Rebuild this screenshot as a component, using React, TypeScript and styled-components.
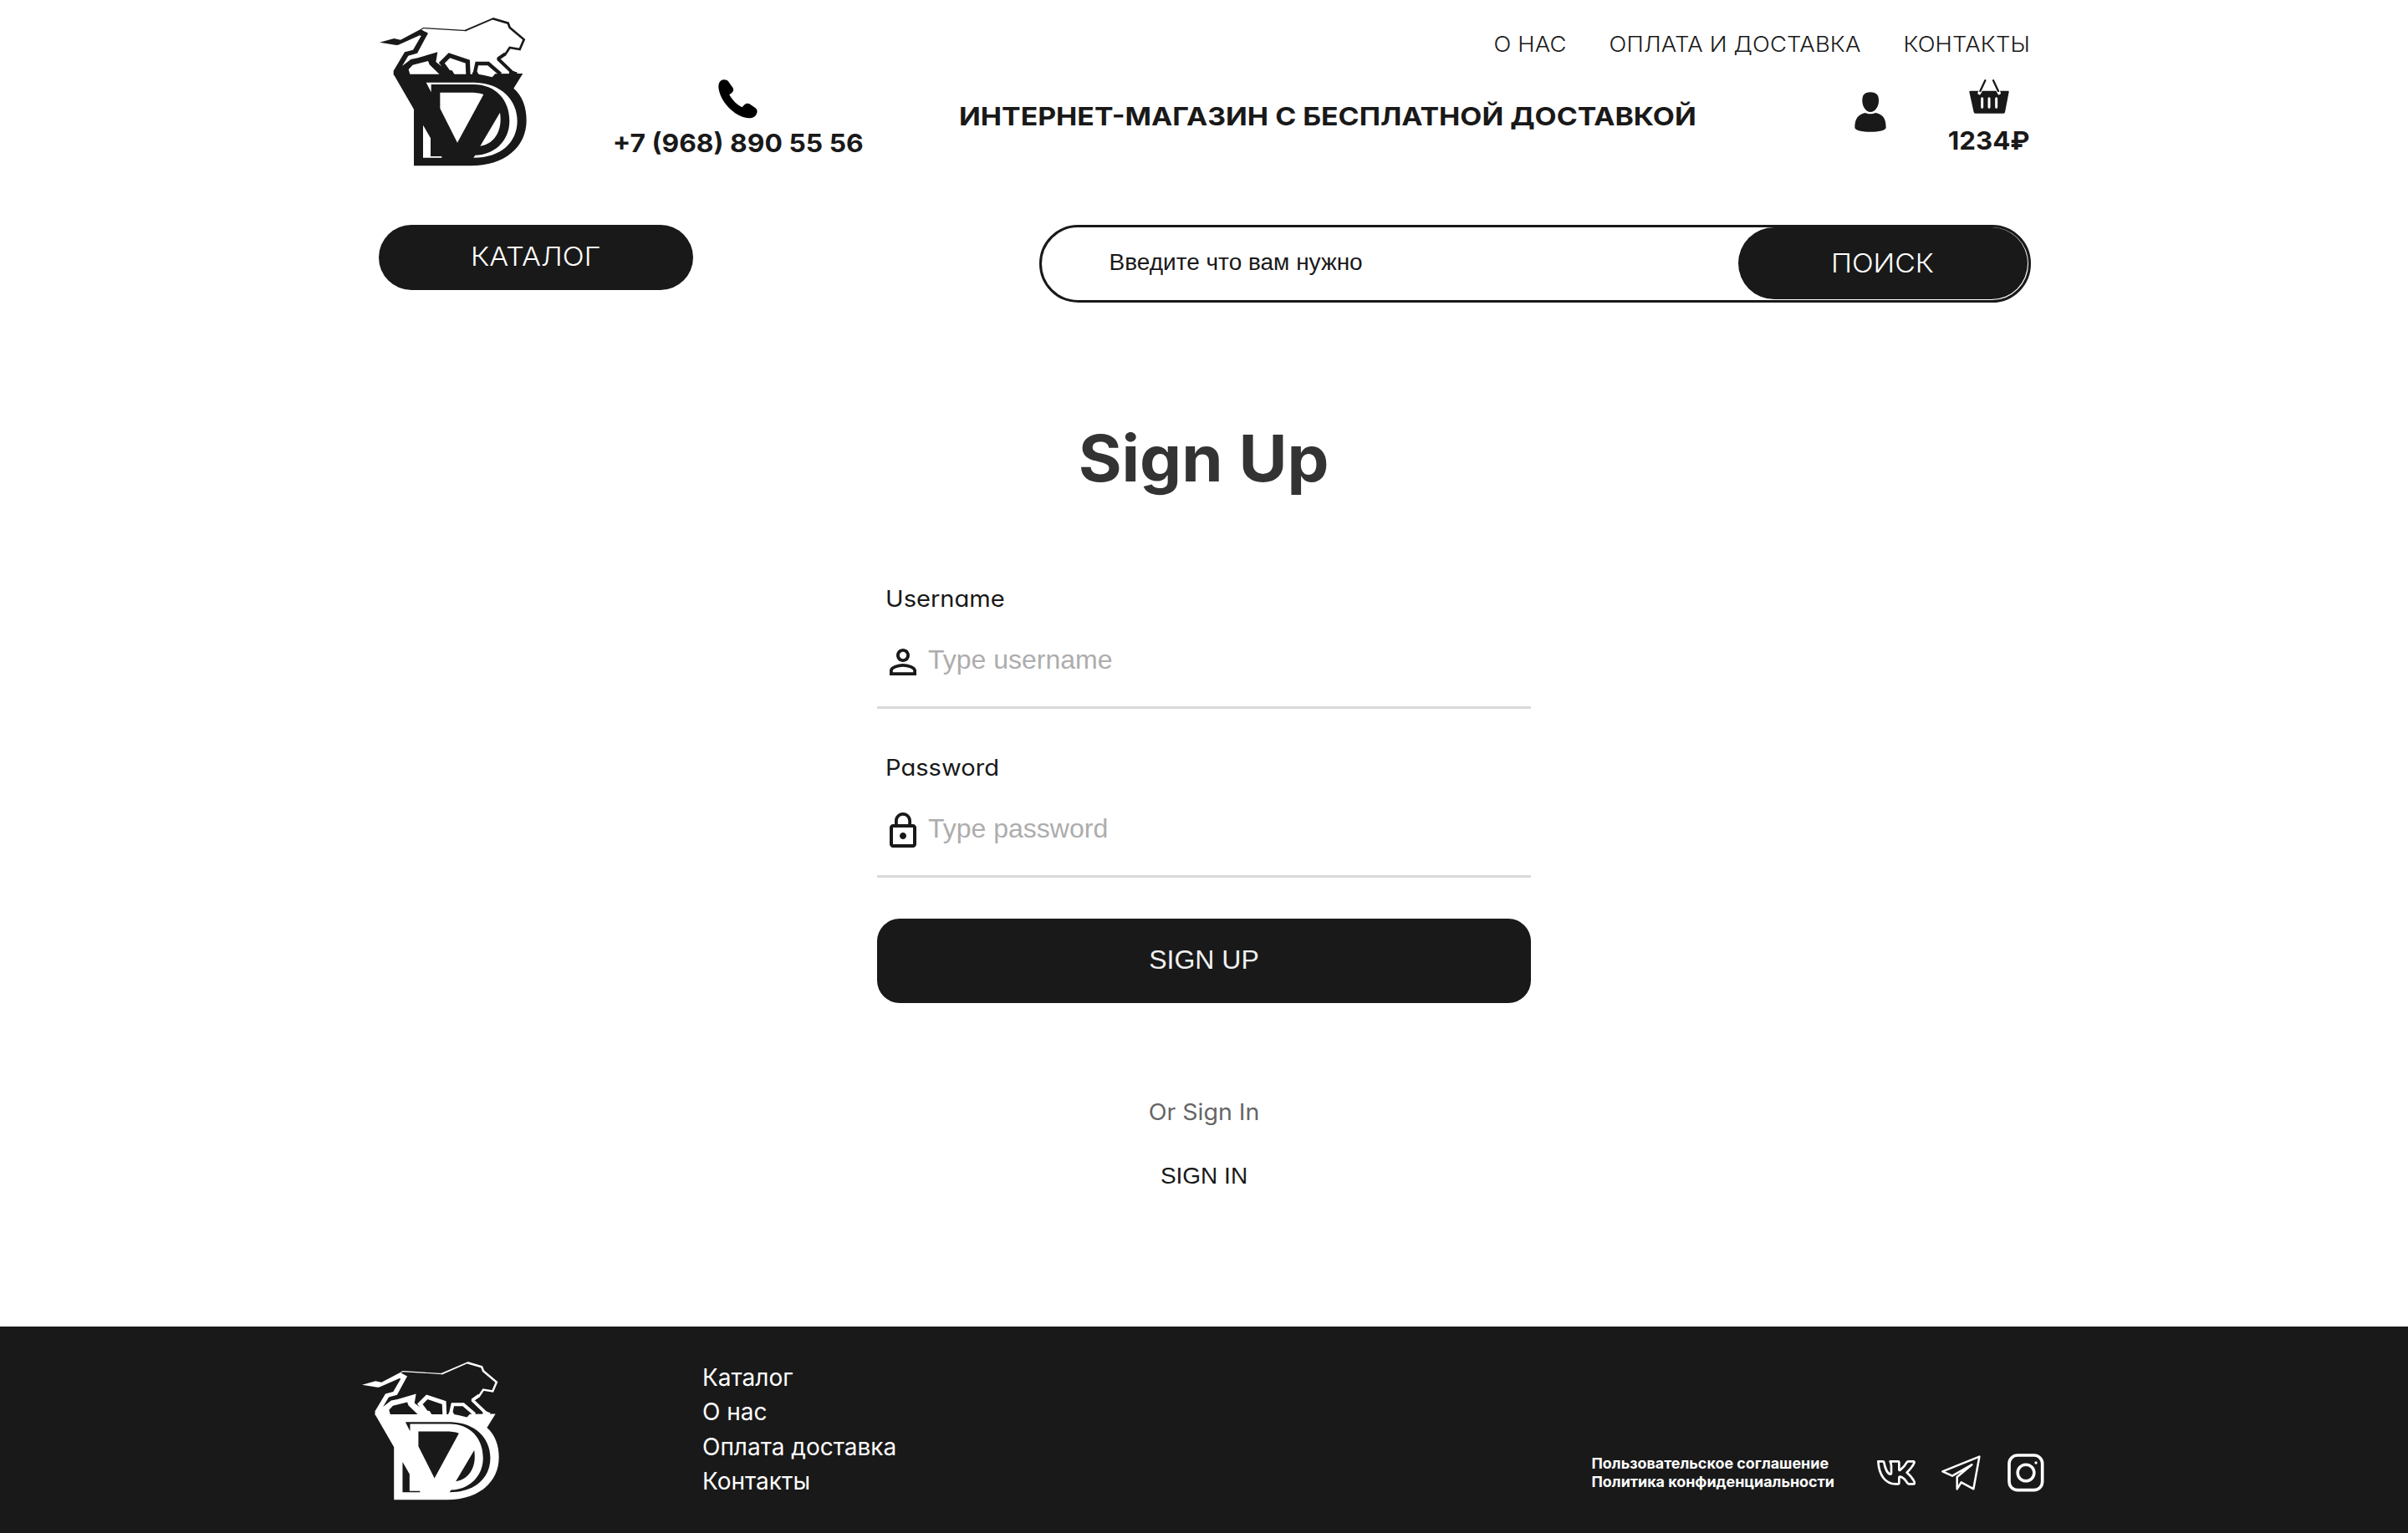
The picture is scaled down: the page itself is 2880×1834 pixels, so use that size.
import React from "react";
import styled, { createGlobalStyle } from "styled-components";

const ink = "#191919";
const display = `Inter, "Open Sans", sans-serif`;
const arial = `"Liberation Sans", Arial, sans-serif`;

const GlobalStyle = createGlobalStyle`
  *, *::before, *::after { box-sizing: border-box; }
  body { margin: 0; background: #fff; color: ${ink}; font-family: ${display}; }
  a { color: inherit; text-decoration: none; }
  button, input { border: 0; margin: 0; padding: 0; background: none; color: inherit; }
  svg { display: block; flex: none; }
`;

const Page = styled.div`
  display: flex;
  flex-direction: column;
  width: 2880px;
  height: 1834px;
  overflow: hidden;
`;

const Header = styled.header`
  width: 1975px;
  margin: 0 auto;
`;

const HeaderTop = styled.div`
  display: flex;
  align-items: flex-start;
  height: 268px;
  padding: 21px 0 0 1px;
`;

const PhoneBlock = styled.a`
  display: flex;
  flex-direction: column;
  align-items: center;
  gap: 9px;
  width: 300px;
  margin: 74px 0 0 103px;
`;

/* Expanded lettering for headings and captions. */
const Wide = styled.span<{ $stretch: number; $origin?: string }>`
  display: inline-block;
  white-space: nowrap;
  transform: scaleX(${(p) => p.$stretch});
  transform-origin: ${(p) => p.$origin ?? "center"};
`;

const Strong = styled(Wide)`
  font-size: 30.5px;
  line-height: 40px;
  font-weight: 700;
`;

const HeaderRight = styled.div`
  flex: 1;
  margin: 14px 0 0 114px;
`;

const Nav = styled.nav`
  display: flex;
  justify-content: flex-end;
  gap: 46.5px;
  height: 36px;
  font-size: 25px;
  line-height: 36px;
  font-weight: 300;
  letter-spacing: 0.15px;
  white-space: nowrap;
  transform: scaleX(1.095);
  transform-origin: right;
`;

const SloganRow = styled.div`
  display: flex;
  align-items: flex-start;
  padding-top: 24px;
`;

const Slogan = styled.div`
  flex: 1;
  margin-top: 24px;
  line-height: 40px;
`;

const Account = styled.a`
  margin: 15px 75px 0 0;
`;

const Cart = styled.a`
  display: flex;
  flex-direction: column;
  align-items: center;
  gap: 12px;
  width: 97px;
`;

const HeaderBottom = styled.div`
  display: flex;
  justify-content: space-between;
  align-items: flex-start;
`;

const PillButton = styled.button<{ $w: number; $h: number }>`
  width: ${(p) => p.$w}px;
  height: ${(p) => p.$h}px;
  border-radius: ${(p) => p.$h / 2}px;
  background: ${ink};
  color: #fff;
  font: 350 31px ${display};
`;

const CatalogButton = styled(PillButton)`
  margin-top: 0.5px;
  padding-bottom: 2px;
`;

const Search = styled.form`
  display: flex;
  align-items: stretch;
  width: 1186px;
  height: 93px;
  margin: 0.5px -1px 0 0;
  border: 3.5px solid ${ink};
  border-radius: 47px;
`;

const SearchButton = styled(PillButton)`
  margin-right: 1px;
`;

const SearchInput = styled.input`
  flex: 1;
  padding: 0 0 3px 81px;
  font: 28px ${arial};
  outline: none;
  &::placeholder { color: ${ink}; opacity: 1; }
`;

const Main = styled.main`
  display: flex;
  flex-direction: column;
  align-items: center;
  flex: 1;
  padding-top: 136px;
`;

const Title = styled.h1`
  margin: 0 0 98px;
  font-size: 76.5px;
  line-height: 100px;
  font-weight: 700;
  color: #333;
`;

const Form = styled.form`
  display: flex;
  flex-direction: column;
  width: 782px;
`;

const Field = styled.label`
  display: block;
  margin-bottom: 50px;
  border-bottom: 3px solid #d9d9d9;
`;

const Caption = styled.span`
  display: block;
  font-size: 26.7px;
  line-height: 40px;
  font-feature-settings: "cv11";
  padding-left: 10px;
`;

const FieldRow = styled.span`
  display: flex;
  align-items: flex-start;
  padding: 32px 0 29px 7px;
`;

const TextInput = styled.input`
  flex: 1;
  height: 48px;
  margin: -2px 0 2px;
  padding-left: 6px;
  font: 32px ${arial};
  outline: none;
  &::placeholder { color: #adadad; opacity: 1; }
`;

const Submit = styled.button`
  height: 101px;
  margin-top: -1px;
  border-radius: 27px;
  background: ${ink};
  color: #f0f0f0;
  font: 32px ${arial};
  padding-bottom: 1px;
`;

const Alternative = styled.p`
  margin: 110px 0 37px;
  font-size: 26.7px;
  line-height: 40px;
  color: #666;
`;

const SignInLink = styled.a`
  font: 28px/40px ${arial};
`;

const Footer = styled.footer`
  display: flex;
  height: 247px;
  padding: 0 435px 0 433px;
  background: ${ink};
  color: #fff;
  align-items: flex-start;
`;

const FooterLogo = styled.div`
  width: 407px;
  padding-top: 42px;
`;

const FooterLinks = styled.nav`
  display: flex;
  flex-direction: column;
  flex: 1;
  padding-top: 41px;
  font-size: 28px;
  line-height: 41.4px;
`;

const Legal = styled.div`
  display: flex;
  flex-direction: column;
  padding-top: 153px;
  font-size: 17.9px;
  line-height: 22.3px;
  font-weight: 700;
  white-space: nowrap;
`;

const Socials = styled.div`
  display: flex;
  align-items: center;
  gap: 31px;
  height: 46px;
  margin: 152px 0 0 51px;
`;

function Logo({ color, width }: { color: string; width: number }) {
  return (
    <svg width={width} height={(width * 533) / 528} viewBox="43 34 528 533" fill={color}>
      <path
        fillRule="evenodd"
        d="M93 237H396L414 240L447 248L458 236L557 235L524 288C555 315 570 355 570 403C570 500 490 566 370 566H166V363Z
        M210 267L228 302V274H380C460 274 509 330 509 405C509 480 450 528 386 528L380 537C480 537 537 480 537 405C537 330 480 270 385 267Z
        M260 303V360L322 483L416 310C400 304 385 303 365 303Z
        M475 375L404 495C455 488 485 440 475 375Z
        M199 420V537H267L265 532H226V467Z"
      />
      <path
        fillRule="evenodd"
        d="M93 225L133 158L163 150L192 100L187 98L110 132L103 133L43 123L95 109L118 114L190 76L217 90L178 162L146 171L124 208L155 184L180 179L251 158L245 193L282 222L303 224L313 240H93Z
        M152 238L147 220L162 204L217 190L222 203L258 238Z"
      />
      <g fill="none" stroke={color}>
        <path strokeWidth="3.5" d="M190 78L200 71.5L353 81" />
        <path strokeWidth="5.5" d="M350 81L451 37.5" />
        <path strokeWidth="8" d="M449 38L504 54L510 70L561 113L546 148L510 142L494 166L467 182" />
        <path strokeWidth="12" strokeLinejoin="bevel" d="M494 164L468 182L522 234L536 236" />
        <path strokeWidth="16" d="M296 238L266 197L293 170L359 192L361 240" />
        <path strokeWidth="13" d="M383 240L392 199H433L477 237" />
      </g>
      <path d="M376 231L392 227L400 240H376ZM508 226H526L538 240H508Z" />
    </svg>
  );
}

const PhoneIcon = () => (
  <svg width="47" height="47" viewBox="477 47 141 141">
    <path d="M497 48C505 48 510 50 514 55L530 78C533 84 531 90 527 94L517 102C527 120 543 138 563 147L571 138C576 133 583 132 589 135L610 149C616 154 618 160 616 167C612 181 600 187 585 186C535 182 482 125 478 75C478 58 485 49 497 48Z" />
  </svg>
);

const UserIcon = () => (
  <svg width="38" height="48" viewBox="473 270 114 144" fill={ink}>
    <path d="M530 271C552 271 560 282 560 301C560 325 546 342 530 342C515 342 501 325 501 301C501 282 508 271 530 271Z" />
    <path d="M512 345C520 350 540 350 548 345C575 350 586 365 586 398C586 407 560 413 530 413C500 413 474 407 474 398C474 365 487 350 512 345Z" />
  </svg>
);

const BasketIcon = () => (
  <svg width="48" height="41" viewBox="885 224 144 123">
    <path fill={ink} d="M890 265H1025Q1029 265 1028 269L1014 342Q1013 346 1009 346H907Q903 346 902 342L886 269Q885 265 890 265Z" />
    <g stroke="#fff" strokeLinecap="round" strokeWidth="9">
      <path d="M932 292V324M957 292V324M983 292V324" />
      <path strokeWidth="12" d="M927 263L922 273M988 263L993 273" />
    </g>
    <path stroke={ink} strokeLinecap="round" strokeWidth="7" d="M943 228L925 266M972 228L990 266" />
  </svg>
);

const PersonIcon = () => (
  <svg width="48" height="48" viewBox="0 0 24 24" fill={ink}>
    <path d="M12 5.9a2.1 2.1 0 1 1 0 4.2 2.1 2.1 0 0 1 0-4.2m0 9c2.97 0 6.1 1.46 6.1 2.1v1.1H5.9V17c0-.64 3.13-2.1 6.1-2.1M12 4C9.79 4 8 5.79 8 8s1.79 4 4 4 4-1.79 4-4-1.79-4-4-4m0 9c-2.67 0-8 1.34-8 4v3h16v-3c0-2.66-5.33-4-8-4" />
  </svg>
);

const LockIcon = () => (
  <svg width="48" height="48" viewBox="0 0 24 24" fill={ink}>
    <path d="M12 17c1.1 0 2-.9 2-2s-.9-2-2-2-2 .9-2 2 .9 2 2 2m6-9h-1V6c0-2.76-2.24-5-5-5S7 3.24 7 6v2H6c-1.1 0-2 .9-2 2v10c0 1.1.9 2 2 2h12c1.1 0 2-.9 2-2V10c0-1.1-.9-2-2-2M8.9 6c0-1.71 1.39-3.1 3.1-3.1s3.1 1.39 3.1 3.1v2H8.9zM18 20H6V10h12z" />
  </svg>
);

const VkIcon = () => (
  <svg width="46" height="30" viewBox="29 52 138 90" fill="none" stroke="#fff" strokeWidth="8" strokeLinejoin="round">
    <path d="M33 56H50Q53 56 54 60C58 82 67 100 76 102Q80 102 80 98V72C80 64 78 62 76 56H105Q108 56 108 60V84Q108 90 112 87C122 79 130 70 136 59Q138 56 141 56H159Q164 56 162 62C157 75 146 86 136 96C146 104 156 115 163 130Q166 137 159 137H143Q140 137 138 134C132 124 124 114 112 111Q108 110 108 114V134Q108 137 104 137H96C58 137 36 105 33 56Z" />
  </svg>
);

const TelegramIcon = () => (
  <svg width="47" height="42" viewBox="260 32 141 126" fill="none" stroke="#fff" strokeWidth="7.5" strokeLinejoin="round" strokeLinecap="round">
    <path d="M264 90L396 37L375 153L331 129L316 153V110L369 66L299 106Z" />
  </svg>
);

const InstagramIcon = styled(({ className }: { className?: string }) => (
  <svg className={className} width="44" height="46" viewBox="500 26 132 138" fill="none" stroke="#fff">
    <rect x="506" y="32" width="119" height="125" rx="30" strokeWidth="11" />
    <circle cx="566" cy="95" r="29.5" strokeWidth="10.5" />
    <circle cx="602" cy="59" r="5" fill="#fff" stroke="none" />
  </svg>
))`
  margin-left: 1px;
`;

const fields = [
  { label: "Username", placeholder: "Type username", type: "text", Icon: PersonIcon },
  { label: "Password", placeholder: "Type password", type: "password", Icon: LockIcon },
];

export default function App() {
  return (
    <Page>
      <GlobalStyle />
      <Header>
        <HeaderTop>
          <Logo color={ink} width={176} />
          <PhoneBlock href="#">
            <PhoneIcon />
            <Strong $stretch={1.043}>+7 (968) 890 55 56</Strong>
          </PhoneBlock>
          <HeaderRight>
            <Nav>
              <a href="#">О НАС</a>
              <a href="#">ОПЛАТА И ДОСТАВКА</a>
              <a href="#">КОНТАКТЫ</a>
            </Nav>
            <SloganRow>
              <Slogan>
                <Strong $stretch={1.109} $origin="left">ИНТЕРНЕТ-МАГАЗИН С БЕСПЛАТНОЙ ДОСТАВКОЙ</Strong>
              </Slogan>
              <Account href="#">
                <UserIcon />
              </Account>
              <Cart href="#">
                <BasketIcon />
                <Strong $stretch={1.025}>1234₽</Strong>
              </Cart>
            </SloganRow>
          </HeaderRight>
        </HeaderTop>
        <HeaderBottom>
          <CatalogButton $w={376} $h={78.5}>
            <Wide $stretch={1.1}>КАТАЛОГ</Wide>
          </CatalogButton>
          <Search>
            <SearchInput placeholder="Введите что вам нужно" />
            <SearchButton type="button" $w={346} $h={86}>
              <Wide $stretch={1.09}>ПОИСК</Wide>
            </SearchButton>
          </Search>
        </HeaderBottom>
      </Header>

      <Main>
        <Title>
          <Wide $stretch={1.037}>Sign Up</Wide>
        </Title>
        <Form>
          {fields.map(({ label, placeholder, type, Icon }) => (
            <Field key={label}>
              <Caption>
                <Wide $stretch={1.09} $origin="left">{label}</Wide>
              </Caption>
              <FieldRow>
                <Icon />
                <TextInput type={type} placeholder={placeholder} />
              </FieldRow>
            </Field>
          ))}
          <Submit type="button">SIGN UP</Submit>
        </Form>
        <Alternative>
          <Wide $stretch={1.068}>Or Sign In</Wide>
        </Alternative>
        <SignInLink href="#">SIGN IN</SignInLink>
      </Main>

      <Footer>
        <FooterLogo>
          <Logo color="#fff" width={164} />
        </FooterLogo>
        <FooterLinks>
          <a href="#">Каталог</a>
          <a href="#">О нас</a>
          <a href="#">Оплата доставка</a>
          <a href="#">Контакты</a>
        </FooterLinks>
        <Legal>
          <a href="#">Пользовательское соглашение</a>
          <a href="#">Политика конфиденциальности</a>
        </Legal>
        <Socials>
          <VkIcon />
          <TelegramIcon />
          <InstagramIcon />
        </Socials>
      </Footer>
    </Page>
  );
}
